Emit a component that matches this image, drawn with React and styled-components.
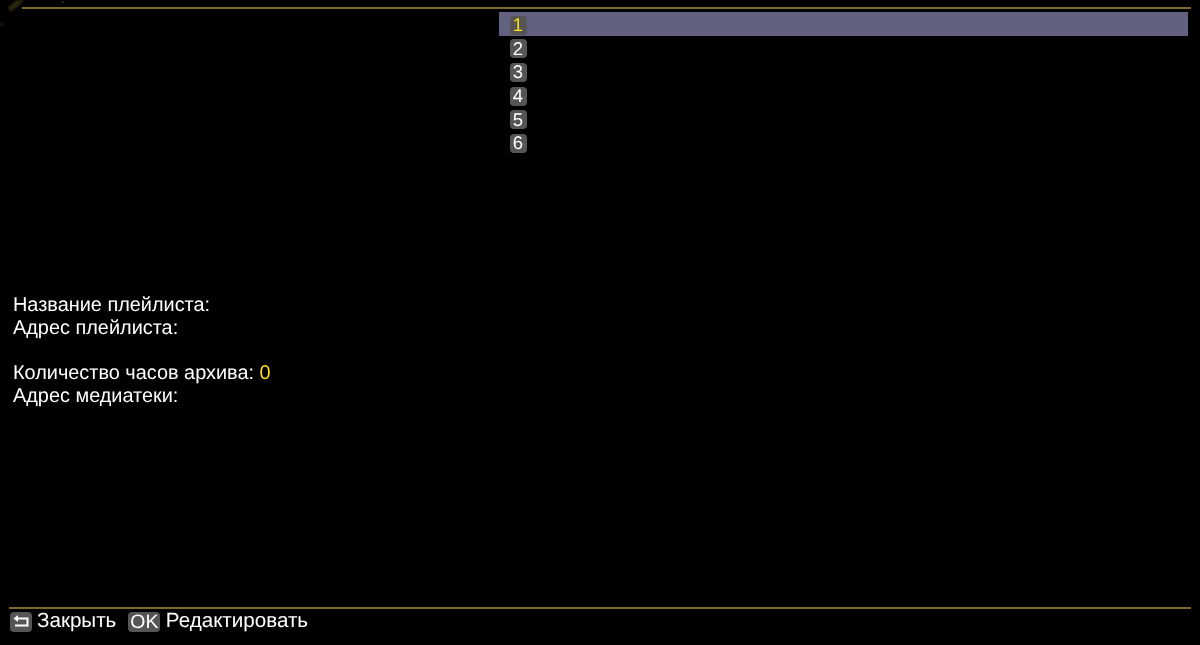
import React from "react";
import styled, { createGlobalStyle } from "styled-components";

const GlobalStyle = createGlobalStyle`
  html, body {
    margin: 0;
    padding: 0;
    background: #000;
    overflow: hidden;
  }
`;

const Screen = styled.div`
  position: relative;
  width: 1200px;
  height: 645px;
  display: flex;
  flex-direction: column;
  background: #000;
  color: #fff;
  font-family: "Liberation Sans", Arial, sans-serif;
  font-size: 19.9px;
  text-rendering: geometricPrecision;
  overflow: hidden;
`;

const Corner = styled.svg`
  position: absolute;
  left: 0;
  top: 0;
`;

const TopRule = styled.div`
  height: 1.5px;
  margin: 7px 9px 0 22px;
  background: #7c6a26;
`;

const Main = styled.div`
  flex: 1;
  display: flex;
  padding-top: 3.5px;
`;

const InfoPane = styled.div`
  width: 499px;
  padding: 282px 0 0 13px;
  box-sizing: border-box;
  line-height: 22.8px;
  will-change: transform;
`;

const InfoLine = styled.div`
  height: 22.8px;
  margin-bottom: ${(p) => (p.$gap ? "22.8px" : "0")};
  white-space: nowrap;
`;

const Value = styled.span`
  color: #ffdf1b;
`;

const List = styled.div`
  width: 689px;
  display: flex;
  flex-direction: column;
  will-change: transform;
`;

const Row = styled.div`
  height: 23.6px;
  display: flex;
  align-items: center;
  padding: 3px 0 0 10.5px;
  box-sizing: border-box;
  background: ${(p) => (p.$active ? "#62617f" : "transparent")};
`;

const Num = styled.span`
  width: 17px;
  height: 19px;
  border-radius: 4px;
  display: flex;
  align-items: center;
  justify-content: center;
  font-size: 18.5px;
  background: #555;
  color: ${(p) => (p.$active ? "#ffdf1b" : "#fff")};
`;

const BottomRule = styled.div`
  height: 1.5px;
  margin: 0 9px;
  background: #7c6a26;
`;

const Footer = styled.div`
  height: 36.5px;
  display: flex;
  align-items: flex-start;
  padding: 0.5px 0 0 9.5px;
  box-sizing: border-box;
  font-size: 20.6px;
  line-height: 22px;
  will-change: transform;
`;

const Hint = styled.div`
  display: flex;
  align-items: center;
  gap: 5.5px;
  margin-right: 12px;
  height: 22px;
`;

const KeyCap = styled.span`
  height: 20px;
  width: ${(p) => (p.$text ? "32px" : "22px")};
  border-radius: 4px;
  background: #555;
  display: flex;
  align-items: center;
  justify-content: center;
  font-size: 19.4px;
  margin-top: 2px;
`;

const rows = [1, 2, 3, 4, 5, 6];

export default function App() {
  return (
    <>
      <GlobalStyle />
      <Screen>
        <Corner width="70" height="28" viewBox="0 0 70 28">
          <defs>
            <filter id="soft">
              <feGaussianBlur stdDeviation="1" />
            </filter>
          </defs>
          <g filter="url(#soft)">
            <path d="M8 7 L17 0 L25 0 L17 7 L10 12 Z" fill="#2c2610" />
            <path d="M0 24 L5 21 L3 26 L0 27 Z" fill="#1a170a" />
          </g>
          <circle cx="63" cy="2" r="1" fill="#333" />
        </Corner>
        <TopRule />
        <Main>
          <InfoPane>
            <InfoLine>Название плейлиста:</InfoLine>
            <InfoLine $gap>Адрес плейлиста:</InfoLine>
            <InfoLine>
              Количество часов архива: <Value>0</Value>
            </InfoLine>
            <InfoLine>Адрес медиатеки:</InfoLine>
          </InfoPane>
          <List>
            {rows.map((n) => (
              <Row key={n} $active={n === 1}>
                <Num $active={n === 1}>{n}</Num>
              </Row>
            ))}
          </List>
        </Main>
        <BottomRule />
        <Footer>
          <Hint>
            <KeyCap>
              <svg width="16" height="13" viewBox="0 0 16 13">
                <path d="M0.5 3.5 L5 0 V7 Z" fill="#fff" />
                <path d="M4 3.5 H14.5 V10.5 H2" fill="none" stroke="#fff" strokeWidth="2" />
              </svg>
            </KeyCap>
            Закрыть
          </Hint>
          <Hint>
            <KeyCap $text>OK</KeyCap>
            Редактировать
          </Hint>
        </Footer>
      </Screen>
    </>
  );
}
